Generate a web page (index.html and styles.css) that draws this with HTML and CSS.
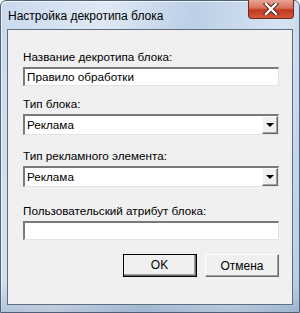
FILE: index.html
```html
<!DOCTYPE html>
<html lang="ru">
<head>
<meta charset="UTF-8">
<title>Настройка декротипа блока</title>
<link rel="stylesheet" href="styles.css">
</head>
<body>

<div class="window">
    <div class="titlebar">
        <span class="title">Настройка декротипа блока</span>
        <div class="close-btn">
            <svg width="16" height="12" viewBox="0 0 16 12">
                <path d="M3 1 L13 11 M13 1 L3 11" stroke="#4a1d16" stroke-width="4.2" stroke-linecap="square"/>
                <path d="M3 1 L13 11 M13 1 L3 11" stroke="#ffffff" stroke-width="2.4" stroke-linecap="square"/>
            </svg>
        </div>
    </div>

    <div class="client">
        <label class="lbl lbl-first">Название декротипа блока:</label>
        <div class="edit">Правило обработки</div>

        <label class="lbl lbl-2">Тип блока:</label>
        <div class="combo">
            <span class="combo-text">Реклама</span>
            <span class="combo-btn"><span class="arrow"></span></span>
        </div>

        <label class="lbl lbl-3">Тип рекламного элемента:</label>
        <div class="combo">
            <span class="combo-text">Реклама</span>
            <span class="combo-btn"><span class="arrow"></span></span>
        </div>

        <label class="lbl lbl-4">Пользовательский атрибут блока:</label>
        <div class="edit"></div>

        <div class="buttons">
            <button class="btn btn-default">OK</button>
            <button class="btn">Отмена</button>
        </div>
    </div>
</div>

</body>
</html>
```

FILE: styles.css
```css
html, body {
    margin: 0;
    padding: 0;
}
body {
    font-family: "Liberation Sans", Arial, sans-serif;
    font-size: 11.7px;
    color: #000;
    background: #fff;
}
.window {
    width: 300px;
    height: 313px;
    box-sizing: border-box;
    border: 1px solid #4f6279;
    border-radius: 6px 6px 0 0;
    background: linear-gradient(100deg, #c9d9ec 0%, #dfe9f5 30%, #bccfe6 55%, #d6e3f2 80%, #b9cde4 100%);
    box-shadow: inset 0 -40px 30px -30px rgba(80, 110, 145, 0.35), inset 1px 1px 0 rgba(255, 255, 255, 0.7);
    display: flex;
    flex-direction: column;
}
.titlebar {
    height: 28px;
    display: flex;
    align-items: flex-start;
    justify-content: space-between;
}
.title {
    margin: 8px 0 0 7px;
    font-size: 12px;
}
.close-btn {
    width: 44px;
    height: 18px;
    margin-right: 5px;
    margin-top: -1px;
    border: 1px solid #6b2a1f;
    border-top: none;
    border-radius: 0 0 4px 4px;
    background: linear-gradient(#e8a596 0%, #d86f5a 45%, #c2391f 55%, #d4583c 100%);
    display: flex;
    align-items: center;
    justify-content: center;
}
.client {
    flex: 1;
    margin: 0 6px 7px 6px;
    border: 1px solid #5f6d7d;
    background: #f0f0f0;
    padding: 20px 13px 0 15px;
    display: flex;
    flex-direction: column;
}
.lbl {
    display: block;
    line-height: 14px;
    margin-bottom: 3px;
}
.lbl-2 { margin-top: 11px; }
.lbl-3 { margin-top: 14px; }
.lbl-4 { margin-top: 17px; }
.edit {
    height: 19px;
    box-sizing: border-box;
    background: #fff;
    border-top: 2px solid #7a7a7a;
    border-left: 2px solid #7a7a7a;
    border-right: 1px solid #e3e3e3;
    border-bottom: 1px solid #e3e3e3;
    padding: 1px 2px;
    line-height: 14px;
}
.combo {
    height: 21px;
    box-sizing: border-box;
    background: #fff;
    border-top: 2px solid #7a7a7a;
    border-left: 2px solid #7a7a7a;
    border-right: 1px solid #e3e3e3;
    border-bottom: 1px solid #e3e3e3;
    display: flex;
    align-items: stretch;
}
.combo-text {
    flex: 1;
    padding: 2px 2px 0;
    line-height: 14px;
}
.combo-btn {
    width: 16px;
    box-sizing: border-box;
    background: #f0f0f0;
    border-top: 1px solid #fff;
    border-left: 1px solid #fff;
    border-right: 1px solid #696969;
    border-bottom: 1px solid #696969;
    box-shadow: inset -1px -1px 0 #a0a0a0;
    display: flex;
    align-items: center;
    justify-content: center;
}
.arrow {
    width: 0;
    height: 0;
    border-left: 4px solid transparent;
    border-right: 4px solid transparent;
    border-top: 4px solid #000;
}
.buttons {
    margin-top: 14px;
    display: flex;
    justify-content: flex-end;
    gap: 8px;
}
.btn {
    width: 74px;
    height: 23px;
    font-family: "Liberation Sans", Arial, sans-serif;
    font-size: 12px;
    background: #f0f0f0;
    border-top: 1px solid #fff;
    border-left: 1px solid #fff;
    border-right: 1px solid #696969;
    border-bottom: 1px solid #696969;
    box-shadow: inset -1px -1px 0 #a0a0a0;
    padding: 0;
}
.btn-default {
    outline: 1px solid #000;
    outline-offset: -1px;
    border-right-width: 2px;
    border-bottom-width: 2px;
}
```
